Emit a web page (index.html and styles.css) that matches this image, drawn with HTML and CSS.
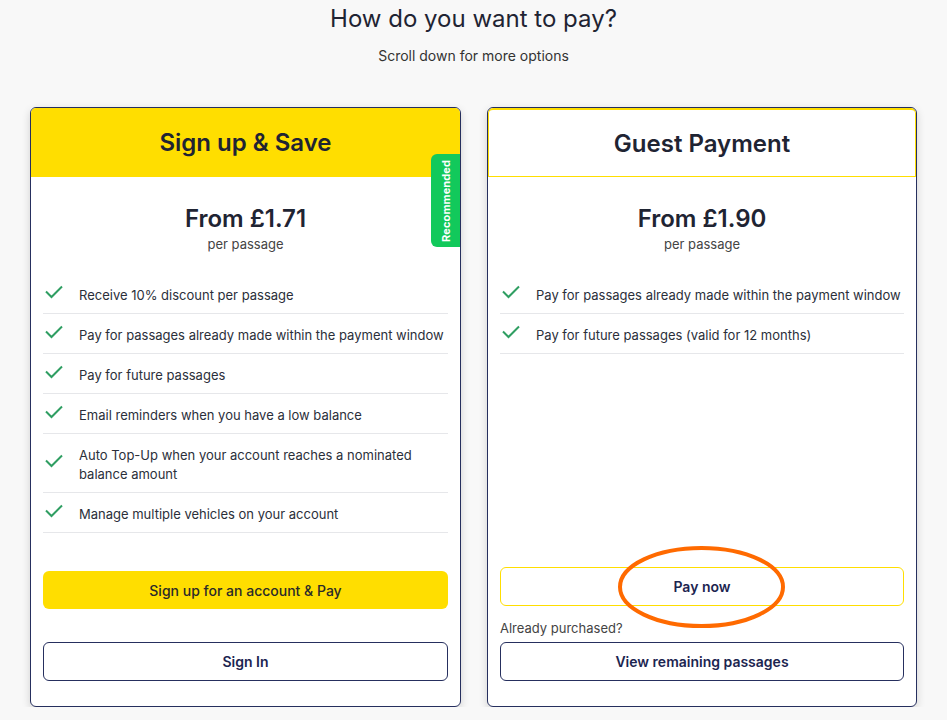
FILE: index.html
```html
<!DOCTYPE html>
<html lang="en">
<head>
    <meta charset="UTF-8">
    <meta name="viewport" content="width=device-width, initial-scale=1.0">
    <title>How do you want to pay?</title>
    <link rel="stylesheet" href="styles.css">
</head>
<body>
<main>
    <h1 class="page-title">How do you want to pay?</h1>
    <p class="page-sub">Scroll down for more options</p>

    <div class="plans">
        <section class="plan">
            <div class="plan-head plan-head--yellow">
                <h2>Sign up &amp; Save</h2>
            </div>
            <div class="badge"><span>Recommended</span></div>
            <div class="plan-body">
                <div class="price">
                    <div class="price-amount">From £1.71</div>
                    <div class="price-unit">per passage</div>
                </div>
                <ul class="features">
                    <li><svg class="tick" viewBox="0 0 20 14"><path d="M2 6.5 L7.5 12 L18 1.5"/></svg><span>Receive 10% discount per passage</span></li>
                    <li><svg class="tick" viewBox="0 0 20 14"><path d="M2 6.5 L7.5 12 L18 1.5"/></svg><span>Pay for passages already made within the payment window</span></li>
                    <li><svg class="tick" viewBox="0 0 20 14"><path d="M2 6.5 L7.5 12 L18 1.5"/></svg><span>Pay for future passages</span></li>
                    <li><svg class="tick" viewBox="0 0 20 14"><path d="M2 6.5 L7.5 12 L18 1.5"/></svg><span>Email reminders when you have a low balance</span></li>
                    <li><svg class="tick" viewBox="0 0 20 14"><path d="M2 6.5 L7.5 12 L18 1.5"/></svg><span>Auto Top-Up when your account reaches a nominated balance amount</span></li>
                    <li><svg class="tick" viewBox="0 0 20 14"><path d="M2 6.5 L7.5 12 L18 1.5"/></svg><span>Manage multiple vehicles on your account</span></li>
                </ul>
                <div class="actions actions--signup">
                    <a href="#" class="btn btn--yellow">Sign up for an account &amp; Pay</a>
                    <a href="#" class="btn btn--outline btn--signin">Sign In</a>
                </div>
            </div>
        </section>

        <section class="plan">
            <div class="plan-head plan-head--outline">
                <h2>Guest Payment</h2>
            </div>
            <div class="plan-body">
                <div class="price">
                    <div class="price-amount">From £1.90</div>
                    <div class="price-unit">per passage</div>
                </div>
                <ul class="features">
                    <li><svg class="tick" viewBox="0 0 20 14"><path d="M2 6.5 L7.5 12 L18 1.5"/></svg><span>Pay for passages already made within the payment window</span></li>
                    <li><svg class="tick" viewBox="0 0 20 14"><path d="M2 6.5 L7.5 12 L18 1.5"/></svg><span>Pay for future passages (valid for 12 months)</span></li>
                </ul>
                <div class="actions actions--guest">
                    <div class="pay-wrap">
                        <a href="#" class="btn btn--ghost-yellow">Pay now</a>
                        <!-- annotation ring drawn over the button -->
                        <svg class="ring" viewBox="0 0 169 84"><ellipse cx="84.5" cy="42" rx="81.5" ry="39"/></svg>
                    </div>
                    <p class="already">Already purchased?</p>
                    <a href="#" class="btn btn--outline">View remaining passages</a>
                </div>
            </div>
        </section>
    </div>
</main>
</body>
</html>
```

FILE: styles.css
```css
body {
    font-family: 'Inter', 'Liberation Sans', sans-serif;
    margin: 0;
    padding: 0;
    background-color: #f8f8f8;
    color: #222;
}

main {
    width: 887px;
    margin: 0 auto;
}

.page-title {
    margin: 4px 0 0;
    font-size: 24px;
    line-height: 30px;
    font-weight: 400;
    text-align: center;
    color: #1f2433;
}

.page-sub {
    margin: 12px 0 0;
    font-size: 14px;
    line-height: 20px;
    text-align: center;
    color: #333;
}

.plans {
    display: grid;
    grid-template-columns: 431px 430px;
    column-gap: 26px;
    margin-top: 41px;
}

.plan {
    position: relative;
    display: flex;
    flex-direction: column;
    background-color: #fff;
    border: 1px solid #262f5e;
    border-radius: 6px;
    box-shadow: 0 3px 8px rgba(0, 0, 0, 0.16);
    overflow: hidden;
}

.plan-head {
    height: 69px;
    display: flex;
    align-items: center;
    justify-content: center;
    box-sizing: border-box;
}

.plan-head h2 {
    margin: 0;
    font-size: 24px;
    font-weight: 600;
    color: #1f2433;
}

.plan-head--yellow {
    background-color: #ffde00;
}

.plan-head--outline {
    border: 1px solid #ffde00;
    border-top-width: 2px;
    border-radius: 5px 5px 0 0;
}

.badge {
    position: absolute;
    top: 46px;
    right: 0;
    width: 29px;
    height: 93px;
    background-color: #12c95b;
    border-radius: 6px 0 0 6px;
    display: flex;
    align-items: center;
    justify-content: center;
}

.badge span {
    writing-mode: vertical-rl;
    transform: rotate(180deg);
    color: #fff;
    font-size: 11px;
    font-weight: 700;
    letter-spacing: 0.1px;
}

.plan-body {
    flex: 1;
    display: flex;
    flex-direction: column;
    padding: 0 12px 25px;
}

.price {
    text-align: center;
    padding-top: 26px;
}

.price-amount {
    font-size: 24px;
    line-height: 32px;
    font-weight: 600;
    color: #1f2433;
}

.price-unit {
    font-size: 13px;
    line-height: 18px;
    color: #444;
}

.features {
    list-style: none;
    margin: 21px 0 0;
    padding: 0;
}

.features li {
    display: flex;
    align-items: center;
    padding: 12px 0 8px;
    border-bottom: 1px solid #e6e7ea;
    font-size: 13px;
    line-height: 19px;
    color: #2b2f3a;
}

.tick {
    flex: none;
    width: 20px;
    height: 14px;
    margin: 0 15px 0 1px;
    position: relative;
    top: -4px;
}

.tick path {
    fill: none;
    stroke: #2f9e62;
    stroke-width: 2;
}

.actions {
    display: flex;
    flex-direction: column;
}

.actions--signup {
    margin-top: 38px;
}

.actions--guest {
    margin-top: auto;
}

.btn {
    display: flex;
    align-items: center;
    justify-content: center;
    height: 39px;
    box-sizing: border-box;
    border-radius: 6px;
    font-size: 14px;
    font-weight: 500;
    text-decoration: none;
}

.btn--yellow {
    height: 38px;
    background-color: #ffde00;
    color: #2a2a2a;
}

.btn--outline {
    border: 1px solid #262f5e;
    color: #1c2550;
    font-weight: 600;
}

.btn--signin {
    margin-top: 33px;
}

.btn--ghost-yellow {
    border: 1px solid #ffde00;
    color: #1c2550;
    font-weight: 600;
}

.pay-wrap {
    position: relative;
}

.ring {
    position: absolute;
    left: 117px;
    top: -22px;
    width: 169px;
    height: 84px;
    pointer-events: none;
}

.ring ellipse {
    fill: none;
    stroke: #ff6a00;
    stroke-width: 4;
}

.already {
    margin: 13px 0 4px;
    font-size: 13px;
    line-height: 19px;
    color: #444;
}
```
